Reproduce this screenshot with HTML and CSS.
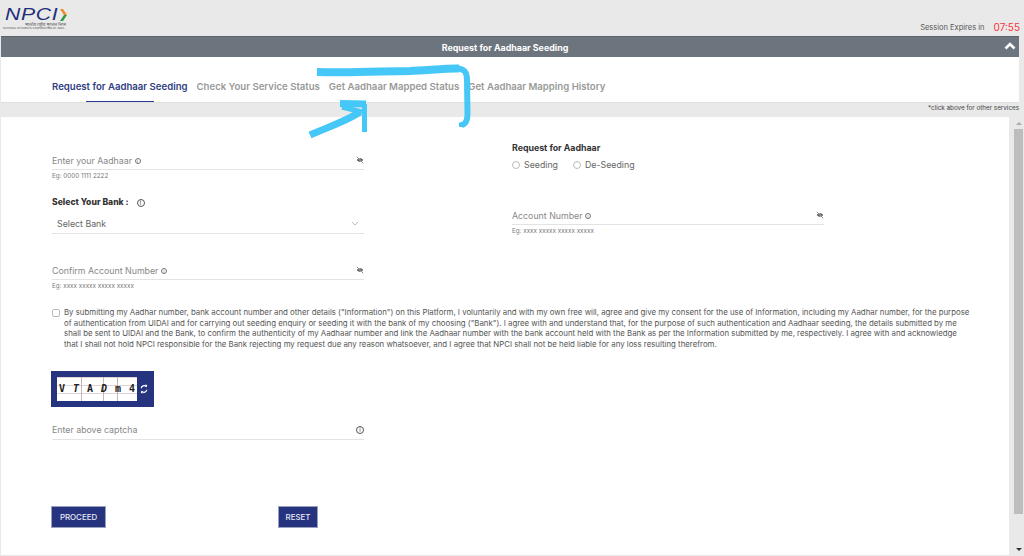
FILE: index.html
```html
<!DOCTYPE html>
<html>
<head>
    <meta charset="UTF-8">
    <meta name="viewport" content="width=device-width, initial-scale=1.0">
    <title>Request for Aadhaar Seeding</title>
    <link rel="stylesheet" href="styles.css">
</head>
<body>
    <div class="page">
        <header class="top">
            <div class="logo">
                <div class="logo-mark">
                    <span class="logo-word">NPCI</span>
                    <svg class="logo-arrow" viewBox="0 0 9 12" width="9" height="12">
                        <path d="M0 0h3l4 6H4z" fill="#f08a24"/>
                        <path d="M4 6h3l-4 6H0z" fill="#2f9a47"/>
                    </svg>
                </div>
                <div class="logo-hindi">भारतीय राष्ट्रीय भुगतान निगम</div>
                <div class="logo-sub">NATIONAL PAYMENTS CORPORATION OF INDIA</div>
            </div>
            <div class="session">
                <span class="session-label">Session Expires in</span>
                <span class="session-time">07:55</span>
            </div>
        </header>

        <div class="title-bar">
            <span>Request for Aadhaar Seeding</span>
            <svg class="title-caret" viewBox="0 0 12 8" width="12" height="8">
                <path d="M1.500 6.500 6 2l4.500 4.500" fill="none" stroke="#fff" stroke-width="2.600"/>
            </svg>
        </div>

        <nav class="tabs">
            <a class="tab tab-active">Request for Aadhaar Seeding</a>
            <a class="tab">Check Your Service Status</a>
            <a class="tab">Get Aadhaar Mapped Status</a>
            <a class="tab">Get Aadhaar Mapping History</a>
        </nav>

        <div class="strip">*click above for other services</div>

        <div class="content">
            <main class="panel">
                <div class="columns">
                    <div class="col col-left">
                        <div class="field">
                            <div class="field-row">
                                <span class="placeholder">Enter your Aadhaar <span class="info-small">i</span></span>
                                <svg class="eye" viewBox="0 0 10 10" width="8" height="8"><path d="M1 5c2-3 6-3 8 0-2 3-6 3-8 0z" fill="#555"/><path d="M1.500 1.500l7 7" stroke="#fff" stroke-width="1.400"/><path d="M1 1l8 8" stroke="#444" stroke-width=".8"/></svg>
                            </div>
                            <div class="hint">Eg: 0000 1111 2222</div>
                        </div>

                        <div class="bank-label">Select Your Bank : <span class="info-large">i</span></div>
                        <div class="field-row bank-select">
                            <span>Select Bank</span>
                            <svg viewBox="0 0 10 6" width="8" height="5"><path d="M1 1l4 4 4-4" fill="none" stroke="#aaa" stroke-width="1"/></svg>
                        </div>

                        <div class="field field-confirm">
                            <div class="field-row">
                                <span class="placeholder">Confirm Account Number <span class="info-small">i</span></span>
                                <svg class="eye" viewBox="0 0 10 10" width="8" height="8"><path d="M1 5c2-3 6-3 8 0-2 3-6 3-8 0z" fill="#555"/><path d="M1.500 1.500l7 7" stroke="#fff" stroke-width="1.400"/><path d="M1 1l8 8" stroke="#444" stroke-width=".8"/></svg>
                            </div>
                            <div class="hint">Eg: xxxx xxxxx xxxxx xxxxx</div>
                        </div>
                    </div>

                    <div class="col col-right">
                        <div class="request-label">Request for Aadhaar</div>
                        <div class="radios">
                            <label class="radio"><span class="radio-dot"></span>Seeding</label>
                            <label class="radio"><span class="radio-dot"></span>De-Seeding</label>
                        </div>
                        <div class="field field-account">
                            <div class="field-row">
                                <span class="placeholder">Account Number <span class="info-small">i</span></span>
                                <svg class="eye" viewBox="0 0 10 10" width="8" height="8"><path d="M1 5c2-3 6-3 8 0-2 3-6 3-8 0z" fill="#555"/><path d="M1.500 1.500l7 7" stroke="#fff" stroke-width="1.400"/><path d="M1 1l8 8" stroke="#444" stroke-width=".8"/></svg>
                            </div>
                            <div class="hint">Eg: xxxx xxxxx xxxxx xxxxx</div>
                        </div>
                    </div>
                </div>

                <div class="consent">
                    <span class="checkbox"></span>
                    <p>By submitting my Aadhar number, bank account number and other details ("Information") on this Platform, I voluntarily and with my own free will, agree and give my consent for the use of Information, including my Aadhar number, for the purpose<br>of authentication from UIDAI and for carrying out seeding enquiry or seeding it with the bank of my choosing ("Bank"). I agree with and understand that, for the purpose of such authentication and Aadhaar seeding, the details submitted by me<br>shall be sent to UIDAI and the Bank, to confirm the authenticity of my Aadhaar number and link the Aadhaar number with the bank account held with the Bank as per the Information submitted by me, respectively. I agree with and acknowledge<br>that I shall not hold NPCI responsible for the Bank rejecting my request due any reason whatsoever, and I agree that NPCI shall not be held liable for any loss resulting therefrom.</p>
                </div>

                <div class="captcha">
                    <div class="captcha-img">
                        <span>V</span><span class="tilt">T</span><span>A</span><span class="tilt">D</span><span>m</span><span>4</span>
                    </div>
                    <svg class="captcha-refresh" viewBox="0 0 10 12" width="8" height="10">
                        <path d="M1.500 5a3.500 3.500 0 0 1 6-2" fill="none" stroke="#fff" stroke-width="1.500"/>
                        <path d="M6 0.500l3 0.500-.5 3z" fill="#fff"/>
                        <path d="M8.500 7a3.500 3.500 0 0 1-6 2" fill="none" stroke="#fff" stroke-width="1.500"/>
                        <path d="M4 11.500l-3-.5.5-3z" fill="#fff"/>
                    </svg>
                </div>

                <div class="field-row captcha-input">
                    <span class="placeholder">Enter above captcha</span>
                    <span class="info-large">i</span>
                </div>

                <div class="actions">
                    <button class="btn btn-proceed">PROCEED</button>
                    <button class="btn btn-reset">RESET</button>
                </div>
            </main>

            <div class="scrollbar">
                <span class="arrow-up"></span>
                <div class="thumb"></div>
                <span class="arrow-down"></span>
            </div>
        </div>

        <!-- blue marker scribble drawn on top of the screenshot -->
        <svg class="scribble" viewBox="0 0 1024 556" width="1024" height="556">
            <path d="M317 72C360 73 385 71 410 71 430 70 450 68 459 68.500" fill="none" stroke="#45c8f7" stroke-width="8"/>
            <path d="M458 68.500C465 69 467 73 467 80L467.500 114C467.500 121 466 124 462 125L462 127" fill="none" stroke="#45c8f7" stroke-width="6"/>
            <path d="M310 135C325 128 345 122 360 112" fill="none" stroke="#45c8f7" stroke-width="7"/>
            <path d="M340 103.500 366 104" fill="none" stroke="#45c8f7" stroke-width="7"/>
            <path d="M342 107 362 112" fill="none" stroke="#45c8f7" stroke-width="5"/>
            <path d="M364.500 104 364.500 132" fill="none" stroke="#45c8f7" stroke-width="5"/>
        </svg>
    </div>
</body>
</html>
```

FILE: styles.css
```css
* {
    box-sizing: border-box;
}
body {
    font-family: Inter, "Open Sans", sans-serif;
    background-color: #e9e9e9;
    margin: 0;
    color: #444;
}
.page {
    position: relative;
    width: 1024px;
    height: 556px;
    overflow: hidden;
}
.top {
    height: 36px;
    display: flex;
    justify-content: space-between;
    padding: 8px 4px 0 3px;
}
.logo-mark {
    display: flex;
    align-items: center;
    height: 14px;
    padding-left: 2px;
}
.logo-word {
    display: block;
    width: 55px;
    font-family: "Liberation Sans", sans-serif;
    font-size: 17px;
    font-style: italic;
    line-height: 14px;
    letter-spacing: 0.5px;
    color: #1f2f7a;
    transform: scaleX(1.25);
    transform-origin: left center;
}
.logo-hindi {
    font-family: "Noto Sans", sans-serif;
    font-size: 4px;
    line-height: 5px;
    text-align: right;
    width: 63px;
    color: #555;
}
.logo-sub {
    font-size: 2.700px;
    line-height: 3px;
    color: #555;
    white-space: nowrap;
}
.session {
    display: flex;
    align-items: center;
    gap: 9px;
    height: 20px;
    margin-top: 9px;
}
.session-label {
    font-size: 7.500px;
    color: #555;
}
.session-time {
    font-size: 10px;
    color: #f9323f;
}
.title-bar {
    height: 21px;
    margin: 0 5px 0 1px;
    padding-right: 10px;
    background-color: #6c747d;
    border-top: 1px solid #5d646c;
    color: #fff;
    font-size: 8.900px;
    font-weight: 700;
    display: flex;
    align-items: center;
    justify-content: center;
    position: relative;
}
.title-caret {
    position: absolute;
    right: 3px;
    top: 5px;
}
.tabs {
    height: 46px;
    margin: 0 5px 0 1px;
    background-color: #fff;
    display: flex;
    gap: 9px;
    padding-left: 51px;
    border-bottom: 1px solid #e0e0e0;
}
.tab {
    font-size: 9.600px;
    font-weight: 600;
    color: #999;
    padding-top: 24px;
    position: relative;
}
.tab-active {
    color: #2f3d83;
}
.tab-active::after {
    content: "";
    position: absolute;
    left: 34px;
    bottom: 0;
    width: 68px;
    height: 1px;
    background-color: #2f3d91;
}
.strip {
    height: 14px;
    margin-right: 5px;
    font-size: 6.300px;
    line-height: 10px;
    text-align: right;
    color: #444;
}
.content {
    display: flex;
    height: 438px;
}
.panel {
    width: 1008px;
    margin-left: 1px;
    background-color: #fff;
    padding: 24px 0 0 51px;
}
.columns {
    display: flex;
    gap: 148px;
    height: 166px;
}
.col {
    width: 312px;
}
.col-left {
    padding-top: 13px;
}
.field-row {
    display: flex;
    justify-content: space-between;
    align-items: center;
    height: 16px;
    padding-bottom: 3px;
    border-bottom: 1px solid #e3e3e3;
}
.placeholder {
    font-size: 8.800px;
    color: #888;
}
.hint {
    font-size: 6.300px;
    line-height: 8px;
    margin-top: 2px;
    color: #777;
}
.info-small {
    display: inline-flex;
    align-items: center;
    justify-content: center;
    width: 6px;
    height: 6px;
    border: 1px solid #777;
    border-radius: 50%;
    font-size: 4px;
    vertical-align: 1px;
    color: #666;
}
.info-large {
    display: inline-flex;
    align-items: center;
    justify-content: center;
    width: 8px;
    height: 8px;
    border: 1px solid #555;
    border-radius: 50%;
    font-size: 6px;
    font-weight: 400;
    color: #444;
}
.bank-label {
    margin-top: 17px;
    font-size: 8.600px;
    font-weight: 800;
    line-height: 10px;
    color: #333;
}
.bank-label .info-large {
    margin-left: 6px;
}
.bank-select {
    margin-top: 6px;
    height: 21px;
    padding: 0 5px 0 5px;
    font-size: 8.800px;
    color: #666;
}
.field-confirm {
    margin-top: 30px;
}
.request-label {
    font-size: 8.800px;
    font-weight: 700;
    line-height: 10px;
    color: #333;
    margin-top: 2px;
}
.radios {
    display: flex;
    gap: 15px;
    margin-top: 7px;
}
.radio {
    display: flex;
    align-items: center;
    gap: 4px;
    font-size: 8.800px;
    line-height: 10px;
    color: #666;
}
.radio-dot {
    width: 8px;
    height: 8px;
    border: 1px solid #bbb;
    border-radius: 50%;
}
.field-account {
    margin-top: 39px;
}
.consent {
    display: flex;
    gap: 4px;
}
.checkbox {
    flex: none;
    width: 8px;
    height: 8px;
    margin-top: 2px;
    border: 1px solid #bbb;
    border-radius: 2px;
}
.consent p {
    margin: 0;
    font-size: 7.830px;
    line-height: 10.700px;
    color: #555;
    white-space: nowrap;
}
.captcha {
    margin: 21px 0 0 -1px;
    width: 103px;
    height: 36px;
    background-color: #26347f;
    display: flex;
    align-items: center;
    padding: 5px 0 5px 6px;
    gap: 3px;
}
.captcha-img {
    width: 80px;
    height: 24px;
    background-color: #fff;
    background-image: linear-gradient(90deg, transparent 24px, #c9b4b4 24px, #c9b4b4 25px, transparent 25px), linear-gradient(90deg, transparent 46px, #c9b4b4 46px, #c9b4b4 47px, transparent 47px), linear-gradient(90deg, transparent 60px, #c9b4b4 60px, #c9b4b4 61px, transparent 61px), linear-gradient(#e0d2d2 1px, transparent 1px);
    background-size: 100% 100%, 100% 100%, 100% 100%, 100% 8px;
    display: flex;
    align-items: center;
    justify-content: space-between;
    padding: 0 2px;
    font-family: "DejaVu Sans Mono", monospace;
    font-size: 10px;
    font-weight: 700;
    color: #222;
}
.tilt {
    font-style: italic;
}
.captcha-input {
    width: 312px;
    margin-top: 17px;
}
.actions {
    display: flex;
    gap: 172px;
    margin: 66px 0 0 -1px;
}
.btn {
    height: 22px;
    background-color: #26347f;
    color: #e6e8f4;
    border: 1px solid #9aa0c0;
    font-family: inherit;
    font-size: 7.900px;
    font-weight: 500;
    padding: 0;
}
.btn-proceed {
    width: 55px;
}
.btn-reset {
    width: 40px;
}
.scrollbar {
    width: 15px;
    padding: 5px 1px 0 5px;
    display: flex;
    flex-direction: column;
    align-items: center;
}
.thumb {
    width: 9px;
    height: 385px;
    margin-top: 4px;
    background-color: #bdbdbd;
}
.arrow-up {
    width: 0;
    height: 0;
    border-left: 3px solid transparent;
    border-right: 3px solid transparent;
    border-bottom: 3px solid #aaa;
}
.arrow-down {
    width: 0;
    height: 0;
    margin-top: 34px;
    border-left: 3px solid transparent;
    border-right: 3px solid transparent;
    border-top: 3px solid #333;
}
.scribble {
    position: absolute;
    left: 0;
    top: 0;
    pointer-events: none;
}
```
